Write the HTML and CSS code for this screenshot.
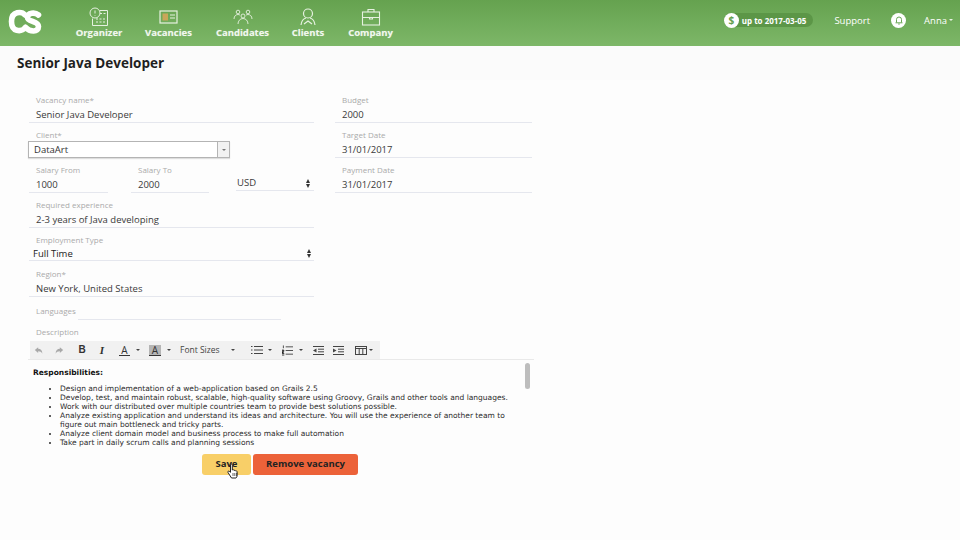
FILE: index.html
```html
<!DOCTYPE html>
<html lang="en">
<head>
  <meta charset="UTF-8">
  <title>Senior Java Developer</title>
  <link rel="stylesheet" href="styles.css">
</head>
<body>

  <header class="topbar">
    <svg class="logo" width="36" height="28" viewBox="0 0 36 28" fill="none" stroke="#fff" stroke-width="5.6" stroke-linecap="round">
      <path d="M18 7C15 3.500 4.500 2.500 4.500 13.500 4.500 24 14 24.500 18.500 19.500"/>
      <path d="M31.500 7C28 4 20.500 4.500 20.500 9.500 20.500 14 31.500 13 31.500 18.500 31.500 24.500 23 24 18.500 19.500"/>
    </svg>
    <nav class="mainnav">
      <a class="navitem nav-organizer">
        <svg width="20" height="20" viewBox="0 0 20 20" fill="none" stroke="#e6f1e0" stroke-width="1">
          <circle cx="6" cy="6" r="5"/><path d="M6 3.500v3M6 8v.6"/><path d="M11 3.500h7.500v15h-15v-7"/><path d="M11 6.500h7.500M7 12h9M7 15h9" stroke-dasharray="2 1.500"/>
        </svg>
        <span>Organizer</span>
      </a>
      <a class="navitem nav-vacancies">
        <svg width="20" height="20" viewBox="0 0 20 16" fill="none" stroke="#e6f1e0" stroke-width="1.2">
          <rect x="1" y="2" width="17" height="12"/><rect x="3.500" y="4.500" width="5.500" height="7" fill="#c9a65a" stroke="none"/><path d="M11 6h5M11 9h5"/>
        </svg>
        <span>Vacancies</span>
      </a>
      <a class="navitem nav-candidates">
        <svg width="20" height="20" viewBox="0 0 20 20" fill="none" stroke="#e6f1e0" stroke-width="0.9">
          <circle cx="5" cy="5" r="1.800"/><circle cx="15" cy="5" r="1.800"/><circle cx="10" cy="9" r="2"/>
          <path d="M1 12c0-3 2-4.500 4-4.500 1 0 1.500.3 2 .7M19 12c0-3-2-4.500-4-4.500-1 0-1.500.3-2 .7M5 17c0-3 2-5.500 5-5.500s5 2.500 5 5.500"/>
        </svg>
        <span>Candidates</span>
      </a>
      <a class="navitem nav-clients">
        <svg width="20" height="20" viewBox="0 0 20 20" fill="none" stroke="#e6f1e0" stroke-width="1.2">
          <circle cx="10" cy="6.500" r="4.500"/><path d="M3 18c.5-4 3-6.500 5-7M17 18c-.5-4-3-6.500-5-7M6 17l4-3 4 3"/>
        </svg>
        <span>Clients</span>
      </a>
      <a class="navitem nav-company">
        <svg width="20" height="20" viewBox="0 0 20 18" fill="none" stroke="#e6f1e0" stroke-width="1.1">
          <rect x="1.500" y="4" width="17" height="13"/><path d="M7 4V1.500h6V4M1.500 9.500h17M8.500 9.500v1.500h3V9.500"/>
        </svg>
        <span>Company</span>
      </a>
    </nav>
    <div class="topright">
      <div class="plan">
        <span class="plan-icon">$</span>
        <span class="plan-text">up to 2017-03-05</span>
      </div>
      <a class="support">Support</a>
      <span class="bell">
        <svg width="10" height="10" viewBox="0 0 10 10" fill="none" stroke="#6aa755" stroke-width="1">
          <path d="M1.500 7.800h7M2.500 7.500V4.500a2.500 2.500 0 0 1 5 0v3M4.200 9h1.600"/>
        </svg>
      </span>
      <a class="user">Anna <i class="caret"></i></a>
    </div>
  </header>

  <div class="titlebar"><h1>Senior Java Developer</h1></div>

  <main class="content">
    <form class="vacancy-form">
      <div class="columns">
        <div class="col-left">
          <div class="field">
            <label>Vacancy name*</label>
            <div class="value">Senior Java Developer</div>
          </div>
          <div class="field field-client">
            <label>Client*</label>
            <div class="combo">
              <span class="combo-text">DataArt</span>
              <span class="combo-btn"><i class="caret caret-gray"></i></span>
            </div>
          </div>
          <div class="salary-row">
            <div class="field salary">
              <label>Salary From</label>
              <div class="value">1000</div>
            </div>
            <div class="field salary">
              <label>Salary To</label>
              <div class="value">2000</div>
            </div>
            <div class="currency">
              <span>USD</span>
              <span class="updown"></span>
            </div>
          </div>
          <div class="field">
            <label>Required experience</label>
            <div class="value">2-3 years of Java developing</div>
          </div>
          <div class="field field-select">
            <label>Employment Type</label>
            <div class="value select-value">
              <span>Full Time</span>
              <span class="updown"></span>
            </div>
          </div>
          <div class="field">
            <label>Region*</label>
            <div class="value">New York, United States</div>
          </div>
          <div class="languages">
            <label>Languages</label>
            <div class="lang-input"></div>
          </div>
          <label class="desc-label">Description</label>
        </div>
        <div class="col-right">
          <div class="field">
            <label>Budget</label>
            <div class="value">2000</div>
          </div>
          <div class="field">
            <label>Target Date</label>
            <div class="value">31/01/2017</div>
          </div>
          <div class="field">
            <label>Payment Date</label>
            <div class="value">31/01/2017</div>
          </div>
        </div>
      </div>

      <div class="editor">
        <div class="toolbar">
          <svg class="tool-undo" width="10" height="9" viewBox="0 0 12 10" fill="#a9a9a9"><path d="M5 1 1 4.500 5 8V5.800c2.500 0 4 .8 5 3 0-3.500-2-5.800-5-5.800z"/></svg>
          <svg class="tool-redo" width="10" height="9" viewBox="0 0 12 10" fill="#a9a9a9"><path d="M7 1l4 3.500L7 8V5.800c-2.500 0-4 .8-5 3 0-3.500 2-5.800 5-5.800z"/></svg>
          <b class="tool-b">B</b>
          <i class="tool-i">I</i>
          <span class="tool-color">A</span>
          <i class="caret caret-dark caret-color"></i>
          <span class="tool-color tool-back">A</span>
          <i class="caret caret-dark caret-back"></i>
          <span class="tool-sizes">Font Sizes</span>
          <i class="caret caret-dark caret-sizes"></i>
          <svg class="tool-ul" width="12" height="10" viewBox="0 0 12 10" stroke="#444" stroke-width="1"><path d="M3 1.500h9M3 5h9M3 8.500h9M0 1.500h1.500M0 5h1.500M0 8.500h1.500"/></svg>
          <i class="caret caret-dark caret-ul"></i>
          <svg class="tool-ol" width="11" height="11" viewBox="0 0 12 11" stroke="#444" stroke-width="1"><path d="M4 1.500h8M4 5.500h8M4 9.500h8M1.500 0v3M0 5h2v1.500H0V9h2.500M0 10.500h2.500"/></svg>
          <i class="caret caret-dark caret-ol"></i>
          <svg class="tool-outdent" width="11" height="9" viewBox="0 0 11 9" stroke="#444" stroke-width="1"><path d="M0 .5h11M0 8.500h11M5 3.200h6M5 5.800h6"/><path d="M3.500 2.500v4L0 4.500z" fill="#444" stroke="none"/></svg>
          <svg class="tool-indent" width="11" height="9" viewBox="0 0 11 9" stroke="#444" stroke-width="1"><path d="M0 .5h11M0 8.500h11M5 3.200h6M5 5.800h6"/><path d="M0 2.500v4l3.500-2z" fill="#444" stroke="none"/></svg>
          <svg class="tool-table" width="12" height="9" viewBox="0 0 12 9" fill="none" stroke="#444" stroke-width="1"><rect x=".5" y=".5" width="11" height="8"/><path d="M.5 2.500h11M4.200 2.500v6M7.800 2.500v6"/></svg>
          <i class="caret caret-dark caret-table"></i>
        </div>
        <div class="editor-body">
          <p class="resp-title">Responsibilities:</p>
          <ul class="resp-list">
            <li>Design and implementation of a web-application based on Grails 2.5</li>
            <li>Develop, test, and maintain robust, scalable, high-quality software using Groovy, Grails and other tools and languages.</li>
            <li>Work with our distributed over multiple countries team to provide best solutions possible.</li>
            <li>Analyze existing application and understand its ideas and architecture. You will use the experience of another team to figure out main bottleneck and tricky parts.</li>
            <li>Analyze client domain model and business process to make full automation</li>
            <li>Take part in daily scrum calls and planning sessions</li>
          </ul>
          <span class="scrollthumb"></span>
        </div>
      </div>

      <div class="actions">
        <button type="button" class="btn btn-save">Save</button>
        <button type="button" class="btn btn-remove">Remove vacancy</button>
        <svg class="pointer" width="13" height="16" viewBox="0 0 13 16">
          <path d="M3.500 1.500c.8-.8 1.800-.2 1.800.8V7l.6-.3c.8 0 1 .3 1.200.6.8-.3 1.200 0 1.400.5.8-.3 1.500.2 1.500 1l.3 2.700c0 1.500-.8 3.500-1.300 3.500H4.500L1 9.500c-.5-1 .3-1.700 1.200-1.200l1.300 1z" fill="#fff" stroke="#222" stroke-width="1"/>
          <path d="M6 10v3M7.800 10v3M9.500 10v3" stroke="#222" stroke-width=".7"/>
        </svg>
      </div>
    </form>
  </main>

</body>
</html>
```

FILE: styles.css
```css
* {
  margin: 0;
  padding: 0;
  box-sizing: border-box;
}

html,
body {
  height: 540px;
  overflow: hidden;
}

body {
  background: #fdfdfd;
  font-family: "Open Sans", sans-serif;
  color: #333;
}

.topbar {
  height: 46px;
  background: linear-gradient(to bottom, #65a24f, #7db768);
  box-shadow: 0 1px 6px rgba(0, 0, 0, 0.22);
  display: flex;
  align-items: center;
  padding-left: 7px;
  color: #fff;
}

.logo {
  flex: none;
  margin-top: -2px;
}

.mainnav {
  display: flex;
  margin-left: 33px;
}

.navitem {
  display: flex;
  flex-direction: column;
  align-items: center;
  font-size: 9.5px;
  font-weight: 700;
  line-height: 13px;
  color: #f1f7ee;
  text-shadow: 0 0 1px rgba(255, 255, 255, 0.4);
}

.navitem svg {
  margin-bottom: -1px;
}

.nav-organizer { width: 46px; }
.nav-vacancies { width: 47px; margin-left: 23px; }
.nav-candidates { width: 53px; margin-left: 24px; }
.nav-clients { width: 32px; margin-left: 23px; }
.nav-company { width: 45px; margin-left: 24px; }

.topright {
  margin-left: auto;
  margin-top: -6px;
  display: flex;
  align-items: center;
  padding-right: 7px;
}

.plan {
  display: flex;
  align-items: center;
  height: 14px;
  background: #5c9647;
  border-radius: 7px;
  padding-right: 7px;
}

.plan-icon {
  width: 15px;
  height: 15px;
  border-radius: 50%;
  background: #fff;
  color: #64a04e;
  font-size: 10px;
  font-weight: 700;
  line-height: 15px;
  text-align: center;
  margin-right: 3px;
}

.plan-text {
  font-size: 8px;
  font-weight: 700;
}

.support {
  margin-left: 21px;
  font-size: 9.5px;
}

.bell {
  width: 15px;
  height: 15px;
  border-radius: 50%;
  background: #fff;
  margin-left: 21px;
  display: flex;
  align-items: center;
  justify-content: center;
}

.user {
  margin-left: 18px;
  font-size: 9.5px;
  display: flex;
  align-items: center;
  gap: 2px;
}

.caret {
  display: block;
  width: 0;
  height: 0;
  border-left: 2px solid transparent;
  border-right: 2px solid transparent;
  border-top: 2px solid #e8f2e3;
}

.titlebar {
  height: 34px;
  padding: 8px 0 0 17px;
  background: #fbfbfb;
}

.titlebar h1 {
  font-size: 13.5px;
  line-height: 18px;
  font-weight: 700;
  color: #1f1f1f;
}

.content {
  padding: 12px 0 0 28px;
}

.vacancy-form {
  width: 507px;
}

.columns {
  display: flex;
}

.col-left {
  width: 286px;
}

.col-right {
  width: 197px;
  margin-left: 21px;
}

.field {
  height: 31px;
  border-bottom: 1px solid #e5e7ee;
  margin-left: 1px;
  margin-bottom: 4px;
  padding-left: 7px;
}

.col-right .field {
  margin-left: 0;
}

label {
  display: block;
  font-size: 8px;
  line-height: 12px;
  color: #aaa;
}

.field label {
  padding-top: 2px;
  height: 15px;
}

.value {
  font-size: 9.5px;
  line-height: 15px;
  color: #3a3a3a;
}

.field-client {
  height: 31px;
  margin-left: 0;
  padding-left: 0;
  border-bottom: 0;
}

.field-client label {
  padding-left: 8px;
  height: 14px;
}

.combo {
  width: 202px;
  height: 17px;
  border: 1px solid #b4b4b4;
  display: flex;
  background: #fff;
  box-shadow: 0 1px 1px rgba(0, 0, 0, 0.12);
}

.combo-text {
  flex: 1;
  font-size: 9.5px;
  line-height: 16px;
  padding-left: 5px;
  color: #333;
}

.combo-btn {
  width: 12px;
  border-left: 1px solid #b4b4b4;
  background: #f2f2f2;
  display: flex;
  align-items: center;
  justify-content: center;
}

.caret-gray {
  border-top-color: #777;
}

.salary-row {
  display: flex;
  height: 35px;
}

.salary-row .salary {
  width: 79px;
}

.salary-row .salary + .salary {
  width: 78px;
  margin-left: 23px;
}

.currency {
  width: 78px;
  height: 29px;
  margin-left: 27px;
  padding: 14px 3px 0 1px;
  border-bottom: 1px solid #e5e7ee;
  display: flex;
  justify-content: space-between;
  font-size: 9.5px;
  line-height: 14px;
  color: #3a3a3a;
}

.updown {
  align-self: center;
  width: 5px;
  height: 9px;
  position: relative;
}

.updown::before,
.updown::after {
  content: "";
  position: absolute;
  left: 0;
  border-left: 2.5px solid transparent;
  border-right: 2.5px solid transparent;
}

.updown::before {
  top: 0;
  border-bottom: 4px solid #333;
}

.updown::after {
  bottom: 0;
  border-top: 4px solid #333;
}

.field-select {
  height: 29px;
  margin-bottom: 5px;
}

.select-value {
  display: flex;
  justify-content: space-between;
  margin-left: -3px;
  line-height: 13px;
  padding-right: 2px;
  color: #222;
}

.languages {
  display: flex;
  height: 19px;
  margin-top: 1px;
  padding: 4px 0 0 8px;
}

.languages label {
  width: 42px;
}

.lang-input {
  width: 203px;
  height: 15px;
  border-bottom: 1px solid #e5e7ee;
}

.desc-label {
  margin: 6px 0 0 8px;
}

.editor {
  margin-top: 3px;
}

.toolbar {
  width: 350px;
  height: 18px;
  margin-left: 2px;
  background: #f1f1f1;
  display: flex;
  align-items: center;
  font-size: 10px;
  line-height: 12px;
  color: #333;
}

.tool-undo { margin-left: 4px; }
.tool-redo { margin-left: 10px; }
.tool-b { margin-left: 14px; width: 8px; text-align: center; font-weight: 700; font-family: "Liberation Sans", sans-serif; }
.tool-i { margin-left: 12px; width: 8px; text-align: center; font-size: 11px; font-weight: 700; font-family: "Liberation Serif", serif; }
.tool-color { margin-left: 13px; width: 11px; height: 11px; line-height: 10px; text-align: center; border-bottom: 1px solid #333; }
.tool-back { margin-left: 9px; width: 12px; background: #b5b5b5; }
.caret-color, .caret-back { margin-left: 6px; }
.tool-sizes { margin-left: 9px; width: 40px; font-size: 8.5px; color: #444; }
.caret-sizes { margin-left: 11px; }
.tool-ul { margin-left: 16px; }
.caret-ul { margin-left: 5px; }
.tool-ol { margin-left: 10px; }
.caret-ol { margin-left: 6px; }
.tool-outdent { margin-left: 10px; }
.tool-indent { margin-left: 9px; }
.tool-table { margin-left: 11px; }
.caret-table { margin-left: 2px; }

.caret-dark {
  border-top-color: #444;
}

.editor-body {
  position: relative;
  width: 506px;
  height: 89px;
  border-top: 1px solid #e9e9e9;
  padding: 8px 0 0 5px;
  font-family: "DejaVu Sans", sans-serif;
  font-size: 7.5px;
  line-height: 9px;
  color: #2b2b2b;
}

.resp-title {
  font-weight: 700;
  color: #111;
  margin-bottom: 7px;
}

.resp-list {
  padding-left: 27px;
  width: 480px;
}

.scrollthumb {
  position: absolute;
  top: 3px;
  right: 4px;
  width: 5px;
  height: 26px;
  border-radius: 3px;
  background: #bdbdbd;
}

.actions {
  position: relative;
  display: flex;
  justify-content: center;
  gap: 2px;
  width: 504px;
  margin-top: 6px;
}

.btn {
  height: 21px;
  padding-bottom: 2px;
  border: 0;
  border-radius: 3px;
  font-family: "Open Sans", sans-serif;
  font-size: 9.5px;
  font-weight: 700;
  color: #222;
}

.btn-save {
  width: 49px;
  background: #f8cf68;
}

.btn-remove {
  width: 105px;
  background: #ec6239;
}

.pointer {
  position: absolute;
  left: 199px;
  top: 9px;
}
```
